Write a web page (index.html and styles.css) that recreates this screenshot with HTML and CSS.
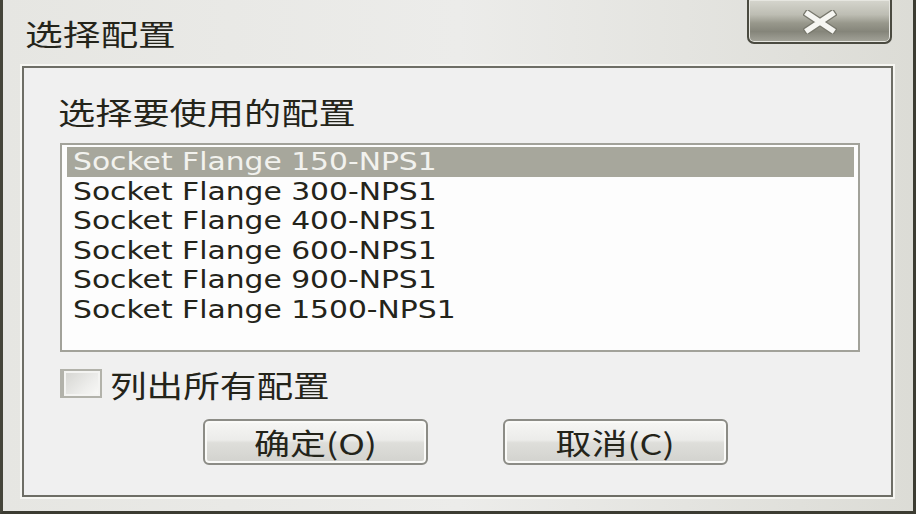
FILE: index.html
```html
<!DOCTYPE html>
<html lang="zh">

<head>
    <meta charset="utf-8">
    <title>选择配置</title>
    <link rel="stylesheet" href="styles.css">
</head>

<body>
    <div class="window">
        <header class="titlebar">
            <h1 class="title"><span>选择配置</span></h1>
            <button class="close" aria-label="关闭">
                <svg width="34" height="24" viewBox="0 0 34 24">
                    <path d="M5 4 L29 20 M29 4 L5 20" stroke="#77776c" stroke-width="8" stroke-linecap="square" />
                    <path d="M5 4 L29 20 M29 4 L5 20" stroke="#f6f6f2" stroke-width="5.5" stroke-linecap="square" />
                </svg>
            </button>
        </header>

        <main class="client">
            <p class="prompt"><span>选择要使用的配置</span></p>

            <ul class="liste">
                <li class="valgt"><span>Socket Flange 150-NPS1</span></li>
                <li><span>Socket Flange 300-NPS1</span></li>
                <li><span>Socket Flange 400-NPS1</span></li>
                <li><span>Socket Flange 600-NPS1</span></li>
                <li><span>Socket Flange 900-NPS1</span></li>
                <li><span>Socket Flange 1500-NPS1</span></li>
            </ul>

            <label class="check">
                <span class="box"></span>
                <span class="check-text">列出所有配置</span>
            </label>

            <nav class="knapper">
                <button class="knap"><span>确定(O)</span></button>
                <button class="knap"><span>取消(C)</span></button>
            </nav>
        </main>
    </div>
</body>

</html>
```

FILE: styles.css
```css
* {
    box-sizing: border-box;
}

body {
    margin: 0;
    font-family: "DejaVu Sans", "Noto Sans CJK SC", sans-serif;
    color: #24241a;
}

.window {
    width: 916px;
    height: 514px;
    display: flex;
    flex-direction: column;
    padding: 0 20px 14px 19px;
    border-left: 3px solid #45453a;
    border-right: 3px solid #3c3c32;
    border-bottom: 3px solid #3c3c32;
    background: linear-gradient(90deg, #e6e6e2 0%, #ececea 50%, #dcdcd6 100%);
}

.titlebar {
    height: 66px;
    display: flex;
    justify-content: space-between;
    align-items: flex-start;
}

.title {
    margin: 17px 0 0 3px;
    font-family: "Noto Sans CJK SC", sans-serif;
    font-weight: normal;
    font-size: 29px;
    line-height: 32px;
}

.title span,
.prompt span,
.check-text,
.knap span {
    display: inline-block;
    transform: scaleX(1.3);
    transform-origin: left center;
}

.close {
    width: 145px;
    height: 44px;
    margin-right: 1px;
    border: 2px solid #4a4a40;
    border-top: none;
    border-radius: 0 0 7px 7px;
    background: linear-gradient(#d6d6ce 0%, #bdbdb3 35%, #98988c 55%, #85857a 75%, #a4a49a 100%);
    box-shadow: inset 0 0 0 1px #e6e6e0;
    display: flex;
    align-items: flex-start;
    justify-content: center;
    padding: 10px 0 0 0;
}

.client {
    flex: 1;
    border: 2px solid #6e6e66;
    box-shadow: 0 0 0 2px #f6f6f2;
    background-color: #f0f0f0;
    padding: 0;
}

.prompt {
    margin: 26px 0 0 34px;
    font-family: "Noto Sans CJK SC", sans-serif;
    font-size: 30px;
    line-height: 34px;
}

.prompt span {
    transform: scaleX(1.24);
}

.liste {
    list-style: none;
    margin: 15px 0 0 36px;
    width: 800px;
    height: 209px;
    padding: 2px 4px 0 5px;
    border: 2px solid #a2a29a;
    background-color: #fdfdfd;
}

.liste li {
    height: 29.5px;
    line-height: 29.5px;
    padding-left: 6px;
    font-size: 25px;
}

.liste li span {
    display: inline-block;
    transform: scaleX(1.19);
    transform-origin: left center;
}

.valgt {
    background-color: #a7a79c;
    color: #f2f2ee;
}

.check {
    display: flex;
    align-items: center;
    margin: 17px 0 0 36px;
    height: 29px;
}

.box {
    width: 42px;
    height: 29px;
    border: 2px solid #b2b2aa;
    border-left-width: 4px;
    box-shadow: inset 0 0 0 2px #f4f4f2;
    background: linear-gradient(135deg, #d4d4d0 0%, #ececea 60%, #fafaf8 100%);
}

.check-text {
    margin-left: 8px;
    font-family: "Noto Sans CJK SC", sans-serif;
    font-size: 30px;
    line-height: 30px;
    transform: scaleX(1.22);
}

.knapper {
    display: flex;
    gap: 75px;
    margin: 21px 0 0 179px;
}

.knap {
    width: 225px;
    height: 46px;
    border: 2px solid #8c8c86;
    border-radius: 6px;
    background: linear-gradient(#f6f6f4 0%, #ececea 45%, #dededa 52%, #d2d2ce 100%);
    box-shadow: inset 0 0 0 2px #fafaf8;
    font-family: "Noto Sans CJK SC", sans-serif;
    font-size: 29px;
    line-height: 40px;
    color: #24241a;
    padding: 0;
    display: flex;
    justify-content: center;
    align-items: center;
}

.knap span {
    transform-origin: center center;
    transform: scaleX(1.24);
}
```
